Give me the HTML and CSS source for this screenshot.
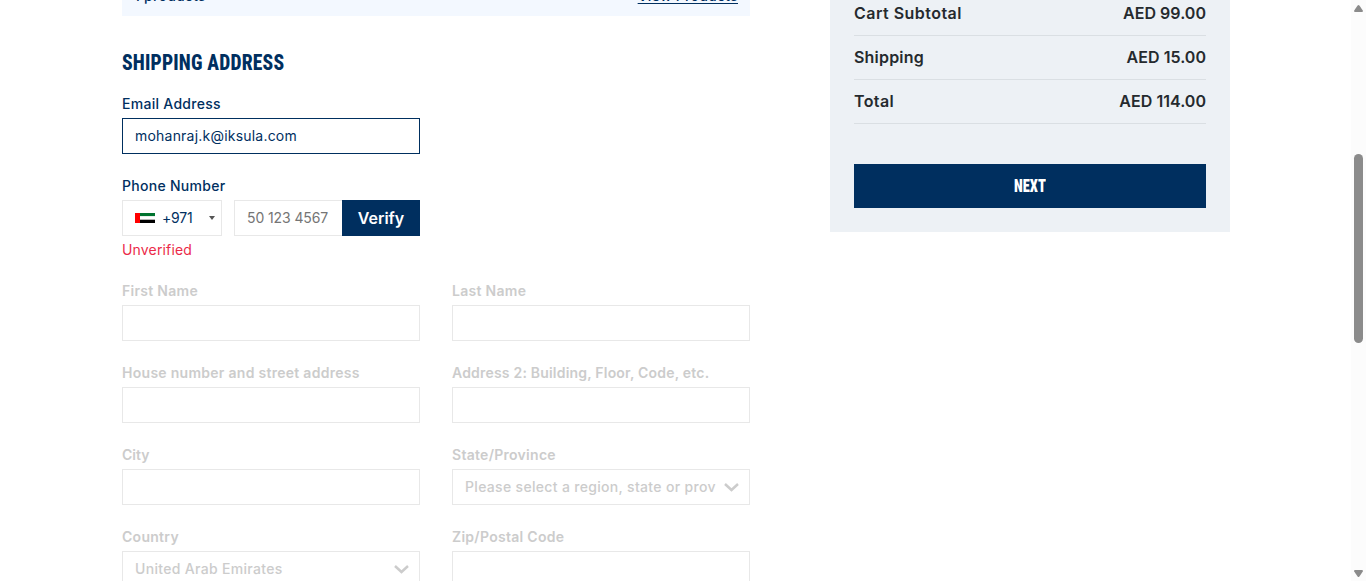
FILE: index.html
```html
<!DOCTYPE html>
<html lang="en">
<head>
<meta charset="utf-8">
<title>Checkout</title>
<link rel="stylesheet" href="styles.css">
</head>
<body>
<div class="page">
  <main class="checkout">
    <section class="shipping">
      <div class="products">
        <span>1 products</span>
        <a class="products-link">View Products</a>
      </div>
      <h1 class="heading"><span class="heading-text">SHIPPING ADDRESS</span></h1>

      <div class="field contact">
        <label class="label">Email Address</label>
        <div class="input input-active">mohanraj.k@iksula.com</div>
      </div>
      <div class="field contact">
        <label class="label phone-label">Phone Number</label>
        <div class="phone">
          <div class="input country-code">
            <svg class="flag" width="20" height="10" viewBox="0 0 20 10">
              <path fill="#00732f" d="M0 0h20v3.3H0z"/>
              <path fill="#fff" d="M0 3.3h20v3.4H0z"/>
              <path fill="#000" d="M0 6.7h20V10H0z"/>
              <path fill="#f00" d="M0 0h5v10H0z"/>
            </svg>
            <span class="dial">+971</span>
            <svg class="caret" width="6" height="4" viewBox="0 0 6 4"><path fill="#555" d="M0 0h6L3 4z"/></svg>
          </div>
          <div class="phone-entry">
            <div class="input phone-number">50 123 4567</div>
            <button class="verify">Verify</button>
          </div>
        </div>
        <div class="status">Unverified</div>
      </div>

      <div class="grid">
        <div class="field"><label class="label">First Name</label><div class="input"></div></div>
        <div class="field"><label class="label">Last Name</label><div class="input"></div></div>
        <div class="field"><label class="label">House number and street address</label><div class="input"></div></div>
        <div class="field"><label class="label address2">Address 2: Building, Floor, Code, etc.</label><div class="input"></div></div>
        <div class="field"><label class="label city">City</label><div class="input"></div></div>
        <div class="field"><label class="label">State/Province</label>
          <div class="input select">
            <span class="select-text">Please select a region, state or prov</span>
            <svg class="chevron" width="15" height="9" viewBox="0 0 15 9"><path d="M1 1l6.5 6L14 1"/></svg>
          </div>
        </div>
        <div class="field"><label class="label">Country</label>
          <div class="input select">
            <span class="select-text">United Arab Emirates</span>
            <svg class="chevron" width="15" height="9" viewBox="0 0 15 9"><path d="M1 1l6.5 6L14 1"/></svg>
          </div>
        </div>
        <div class="field"><label class="label">Zip/Postal Code</label><div class="input"></div></div>
      </div>
    </section>

    <aside class="summary">
      <div class="row"><span class="subtotal">Cart Subtotal</span><span class="price">AED 99.00</span></div>
      <div class="row"><span class="ship">Shipping</span><span class="price">AED 15.00</span></div>
      <div class="row"><span class="total">Total</span><span class="price">AED 114.00</span></div>
      <button class="next"><span class="next-text">NEXT</span></button>
    </aside>
  </main>

  <div class="scrollbar">
    <svg width="9" height="7" viewBox="0 0 9 7"><path d="M3.6.6Q4.5-.4 5.4.6L8.8 5.6Q9.2 7 8 7H1Q-.2 7 .2 5.6z"/></svg>
    <div class="thumb"></div>
    <svg class="arrow-down" width="9" height="7" viewBox="0 0 9 7"><path d="M3.6 6.4Q4.5 7.4 5.4 6.4L8.8 1.4Q9.2 0 8 0H1Q-.2 0 .2 1.4z"/></svg>
  </div>
</div>
</body>
</html>
```
FILE: styles.css
```css
* { box-sizing: border-box; }

body {
  margin: 0;
  font: 500 14px/20px Inter, "Noto Sans", sans-serif;
  letter-spacing: 0.28px;
  color: #002f5f;
  background: #fff;
  overflow: hidden;
}

.page {
  display: flex;
  justify-content: space-between;
  height: 581px;
  overflow: hidden;
}

.checkout {
  display: flex;
  align-items: flex-start;
  gap: 80px;
  padding-left: 122px;
}

.shipping { width: 628px; }

.products {
  display: flex;
  align-items: center;
  justify-content: space-between;
  height: 40px;
  margin-top: -24px;
  padding: 0 12px;
  background: #f3f8ff;
}

.products-link {
  text-decoration: underline;
  text-underline-offset: 2px;
}

.heading {
  height: 32px;
  margin: 30px 0 16px;
  font: 800 22.5px/33px Roboto, "Liberation Sans", sans-serif;
  font-stretch: 75%;
  letter-spacing: 0.2px;
}

.heading-text {
  display: inline-block;
  transform: scaleX(0.87);
  transform-origin: left;
}

.field { min-width: 0; }
.contact { width: 298px; }
.contact + .contact { margin-top: 22px; }

.label {
  display: block;
  height: 20px;
  margin-bottom: 4px;
}

.input {
  display: flex;
  align-items: center;
  height: 36px;
  padding: 0 12px;
  border: 1px solid #e8e8e8;
  background: #fff;
}

.input-active {
  border-color: #002f5f;
  font-weight: 400;
  letter-spacing: 0.21px;
}

.phone { display: flex; gap: 12px; }

.country-code {
  width: 100px;
  padding-right: 6px;
  font-weight: 400;
  letter-spacing: -0.2px;
}

.dial { margin-left: 7px; }
.caret { margin-left: auto; }
.phone-entry { display: flex; flex: 1; }

.phone-number {
  width: 108px;
  border-right: 0;
  color: #757575;
  font-weight: 400;
  letter-spacing: -0.1px;
}

.verify {
  width: 78px;
  height: 36px;
  padding: 0 0 1px;
  border: 0;
  background: #002f5f;
  color: #fff;
  font: 600 16px/20px Inter, sans-serif;
}

.status {
  margin-top: 4px;
  color: #eb2a49;
  font-weight: 400;
  letter-spacing: 0.16px;
}

.grid {
  display: grid;
  grid-template-columns: 298px 298px;
  gap: 22px 32px;
  margin-top: 21px;
  color: #ccc;
}

.grid .label { font-weight: 600; }
.grid .address2 { letter-spacing: 0.2px; }
.grid .city { letter-spacing: 0; }

.select { padding-right: 10px; justify-content: space-between; }

.select-text {
  padding-bottom: 1px;
  white-space: nowrap;
  letter-spacing: 0.32px;
}

.chevron {
  fill: none;
  stroke: #ccc;
  stroke-width: 2.5;
}

.summary {
  width: 400px;
  height: 240px;
  margin-top: -8px;
  padding: 0 24px 24px;
  background: #edf1f5;
  color: #252a2e;
  font-size: 16px;
  font-weight: 600;
}

.row {
  display: flex;
  justify-content: space-between;
  align-items: center;
  height: 44px;
  padding-bottom: 1px;
  border-bottom: 1px solid #dadfe3;
}

.subtotal { letter-spacing: 0.47px; }
.ship { letter-spacing: 0.2px; }
.total { letter-spacing: 0.37px; }
.price { letter-spacing: 0.03px; }

.next {
  display: block;
  width: 352px;
  height: 44px;
  margin-top: 40px;
  padding: 0;
  border: 0;
  background: #002f5f;
  color: #fff;
  font: 900 18px/24px Roboto, "Liberation Sans", sans-serif;
  font-stretch: 75%;
}

.next-text {
  display: inline-block;
  transform: scaleX(0.8);
}

.scrollbar {
  display: flex;
  flex-direction: column;
  align-items: center;
  width: 15px;
  padding: 5px 0 4px;
  background: #fcfcfc;
  fill: #8b8b8b;
}

.thumb {
  width: 9px;
  height: 189px;
  margin-top: 142px;
  border-radius: 5px;
  background: #8b8b8b;
}

.arrow-down { margin-top: auto; }
```
